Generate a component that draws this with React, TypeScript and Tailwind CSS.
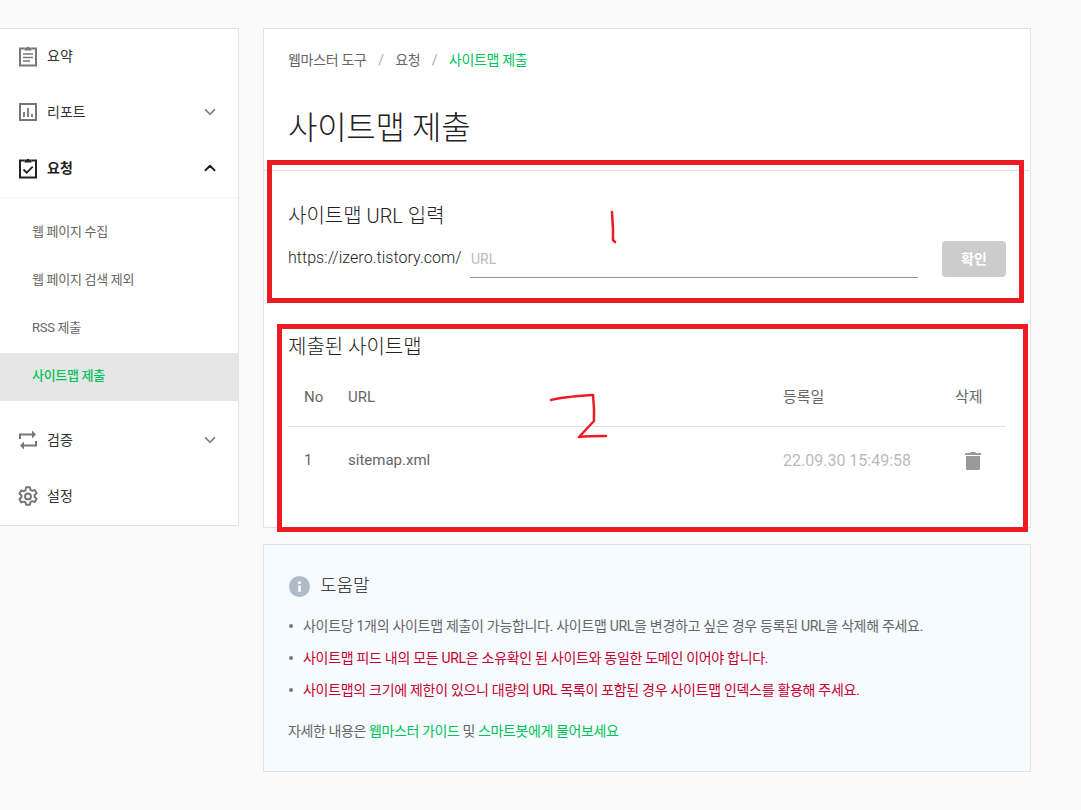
import { ChevronDown, ChevronUp } from "lucide-react";

const fontStack = "font-['Roboto','Noto_Sans_CJK_KR',sans-serif]";

const ClipboardIcon = () => (
  <svg width="20" height="22" viewBox="0 0 20 22" fill="none" stroke="#777" strokeWidth="2">
    <path d="M6.500 3.500H2v17h16v-17h-4.500" />
    <path d="M6.500 2.500h2.300a1.300 1.300 0 0 1 2.400 0h2.300v3h-7z" fill="#777" stroke="none" />
    <path d="M5 9h10M5 12.500h10M5 16h7" strokeWidth="1.500" />
  </svg>
);

const ReportIcon = () => (
  <svg width="20" height="20" viewBox="0 0 20 20" fill="none" stroke="#777" strokeWidth="2">
    <rect x="2" y="2" width="16" height="16" />
    <path d="M6 15v-5M10 15V6M14 15v-3" strokeWidth="1.800" />
  </svg>
);

const RequestIcon = () => (
  <svg width="20" height="22" viewBox="0 0 20 22" fill="none" stroke="#222" strokeWidth="2">
    <path d="M6.500 3.500H2v17h16v-17h-4.500" />
    <path d="M6.500 2.500h2.300a1.300 1.300 0 0 1 2.400 0h2.300v3h-7z" fill="#222" stroke="none" />
    <path d="M5.500 12.500l3.200 3.200 6-6" strokeWidth="1.800" />
  </svg>
);

const RepeatIcon = () => (
  <svg width="20" height="20" viewBox="0 0 20 20" fill="none" stroke="#777" strokeWidth="2">
    <path d="M2 9V4.500h14" />
    <path d="M14 .5l4 4-4 4z" fill="#777" stroke="none" />
    <path d="M18 11v4.500H4" />
    <path d="M6 11.500l-4 4 4 4z" fill="#777" stroke="none" />
  </svg>
);

const GearIcon = () => (
  <svg width="20" height="20" viewBox="0 0 24 24" fill="none" stroke="#777" strokeWidth="2.400" strokeLinejoin="round">
    <path d="M9.700 1.500h4.600l.7 3.300 1.800 1 3.200-1 2.300 4-2.500 2.200v2l2.500 2.200-2.300 4-3.200-1-1.800 1-.7 3.300H9.700L9 19.700l-1.800-1-3.200 1-2.300-4L4.200 13.500v-2L1.700 9.300l2.300-4 3.200 1 1.800-1z" />
    <circle cx="12" cy="12.500" r="3.500" />
  </svg>
);

const MenuRow = ({
  icon,
  label,
  chevron,
  active,
}: {
  icon: React.ReactNode;
  label: string;
  chevron?: "up" | "down";
  active?: boolean;
}) => (
  <div className="h-14 flex items-center pl-[18px] pr-[19px] pb-[2px]">
    <span className="w-5 flex justify-center mr-[9px]">{icon}</span>
    <span className={`text-sm flex-1 ${active ? "font-bold text-[#222]" : "text-[#333]"}`}>{label}</span>
    {chevron === "down" && <ChevronDown size={18} strokeWidth={2.2} className="text-[#777]" />}
    {chevron === "up" && <ChevronUp size={18} strokeWidth={2.6} className="text-[#222]" />}
  </div>
);

const subItems = ["웹 페이지 수집", "웹 페이지 검색 제외", "RSS 제출", "사이트맵 제출"];

const Sidebar = () => (
  <aside className="w-[239px] h-[498px] shrink-0 bg-white border-y border-r border-[#e2e2e2]">
    <MenuRow icon={<ClipboardIcon />} label="요약" />
    <MenuRow icon={<ReportIcon />} label="리포트" chevron="down" />
    <MenuRow icon={<RequestIcon />} label="요청" chevron="up" active />
    <div className="pt-[11px] pb-[12px] border-t border-[#f6f6f6]">
      {subItems.map((item, i) => (
        <div
          key={item}
          className={`h-12 flex items-center pl-[32px] pb-[2px] text-[13px] tracking-[-0.3px] ${
            i === 3 ? "bg-[#e6e6e6] text-[#00c358] font-medium" : "text-[#666]"
          }`}
        >
          {item}
        </div>
      ))}
    </div>
    <MenuRow icon={<RepeatIcon />} label="검증" chevron="down" />
    <MenuRow icon={<GearIcon />} label="설정" />
  </aside>
);

const MainCard = () => (
  <section className="h-[500px] bg-white border border-[#e2e2e2]">
    <div className="px-6 pt-[21px] h-[142px] border-b border-[#e2e2e2]">
      <div className="flex items-center text-sm tracking-[-0.3px] text-[#666] h-5">
        <span>웹마스터 도구</span>
        <span className="mx-[11.5px] text-[#aaa]">/</span>
        <span>요청</span>
        <span className="mx-[11.5px] text-[#aaa]">/</span>
        <span className="text-[#00c358]">사이트맵 제출</span>
      </div>
      <h1 className="mt-[34px] text-[32px] leading-[48px] tracking-[-0.3px] font-light text-[#222]">사이트맵 제출</h1>
    </div>
    <div className="px-6 pt-[32px]">
      <h2 className="text-xl leading-[26px] font-light text-[#222]">사이트맵 URL 입력</h2>
      <div className="flex items-end mt-[12px]">
        <span className="w-[174px] text-base leading-[22px] tracking-[0.04px] font-light text-[#222] pb-[9px] mr-2 whitespace-nowrap">https://izero.tistory.com/</span>
        <div className="w-[448px] h-[37px] pl-[1px] border-b border-[#999] flex items-center text-sm text-[#bbb]">URL</div>
        <button className="ml-6 w-16 h-9 mb-[1px] rounded bg-[#cccccc] text-sm font-bold text-white">확인</button>
      </div>
    </div>
    <div className="px-6 mt-[56px]">
      <h2 className="text-xl leading-[26px] font-light text-[#222]">제출된 사이트맵</h2>
      <div className="h-[59px] flex items-center border-b border-[#e2e2e2] text-[15px] text-[#666] mt-[8px]">
        <span className="w-[60px] pl-4">No</span>
        <span className="flex-1">URL</span>
        <span className="w-[172px]">등록일</span>
        <span className="w-[51px]">삭제</span>
      </div>
      <div className="h-[67px] flex items-center text-[15px] text-[#666]">
        <span className="w-[60px] pl-4">1</span>
        <span className="flex-1">sitemap.xml</span>
        <span className="w-[172px] text-base text-[#bbb]">22.09.30 15:49:58</span>
        <span className="w-[51px] pl-[10px]">
          <svg width="16" height="18" viewBox="0 0 16 18" fill="#999">
            <path d="M5.500 0h5l.7 1H16v2H0V1h4.800z" />
            <path d="M1 4h14v12.500a1.500 1.500 0 0 1-1.500 1.500h-11A1.500 1.500 0 0 1 1 16.500z" />
          </svg>
        </span>
      </div>
    </div>
  </section>
);

const HelpCard = () => (
  <section className="h-[228px] mt-4 bg-[#f5fbfe] border border-[#e2e2e2] px-6 pt-[27px]">
    <div className="flex items-center">
      <svg width="21" height="21" viewBox="0 0 20 20" className="ml-[1px]">
        <circle cx="10" cy="10" r="10" fill="#adbcc8" />
        <rect x="8.800" y="9" width="2.400" height="6" fill="#fff" />
        <rect x="8.800" y="5.200" width="2.400" height="2.400" fill="#fff" />
      </svg>
      <span className="ml-[10px] text-lg font-light text-[#222]">도움말</span>
    </div>
    <ul className="mt-[10px] text-sm tracking-[-0.3px] text-[#666]">
      <li className="h-8 flex items-center">
        <span className="w-1 h-1 rounded-full bg-[#777] ml-[1px] mr-[10px]" />
        사이트당 1개의 사이트맵 제출이 가능합니다. 사이트맵 URL을 변경하고 싶은 경우 등록된 URL을 삭제해 주세요.
      </li>
      <li className="h-8 flex items-center text-[#c8002d]">
        <span className="w-1 h-1 rounded-full bg-[#777] ml-[1px] mr-[10px]" />
        사이트맵 피드 내의 모든 URL은 소유확인 된 사이트와 동일한 도메인 이어야 합니다.
      </li>
      <li className="h-8 flex items-center text-[#c8002d]">
        <span className="w-1 h-1 rounded-full bg-[#777] ml-[1px] mr-[10px]" />
        사이트맵의 크기에 제한이 있으니 대량의 URL 목록이 포함된 경우 사이트맵 인덱스를 활용해 주세요.
      </li>
    </ul>
    <p className="mt-[13px] text-sm tracking-[-0.4px] leading-6 text-[#666]">
      자세한 내용은 <span className="text-[#00c358]">웹마스터 가이드</span> 및{" "}
      <span className="text-[#00c358]">스마트봇에게 물어보세요</span>
    </p>
  </section>
);

// red marks drawn by hand over the screenshot
const Annotations = () => (
  <>
    <div className="absolute left-[267px] top-[160px] w-[757px] h-[143px] border-[5px] border-[#ed1c24]" />
    <div className="absolute left-[277px] top-[324px] w-[751px] h-[208px] border-[5px] border-[#ed1c24]" />
    <svg className="absolute left-0 top-0 pointer-events-none" width="1081" height="810" fill="none" stroke="#ed1c24" strokeWidth="2.500" strokeLinecap="round" strokeLinejoin="round">
      <path d="M612 212l1 17 0 11 2 2" />
      <path d="M551 400c10-3 26-4 40-5l2 0 1 14 0 12-15 16c8-1 18-1 27-1" />
    </svg>
  </>
);

export default function App() {
  return (
    <div className={`relative w-[1081px] h-[810px] overflow-hidden bg-[#fafafa] ${fontStack}`}>
      <div className="flex pt-[28px] gap-6">
        <Sidebar />
        <main className="w-[768px]">
          <MainCard />
          <HelpCard />
        </main>
      </div>
      <Annotations />
    </div>
  );
}
